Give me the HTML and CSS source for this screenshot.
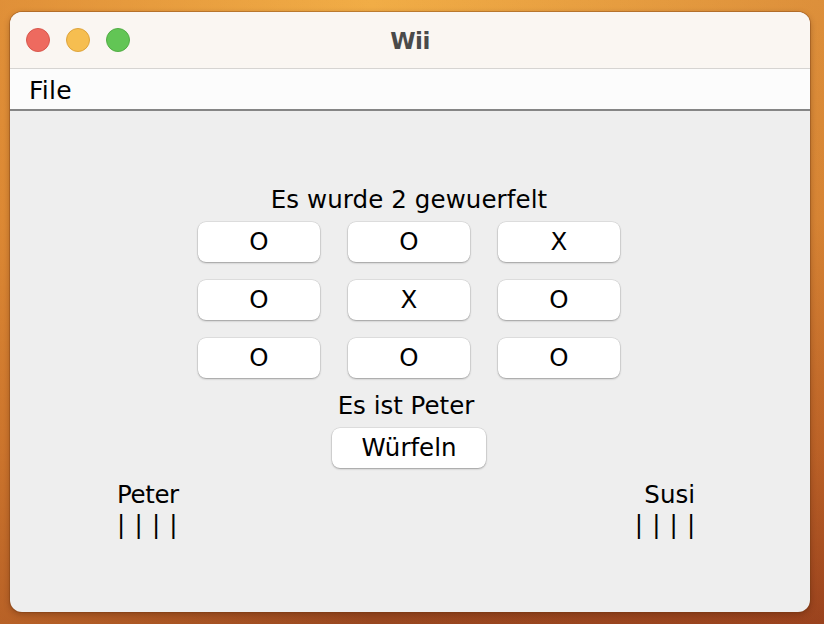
FILE: index.html
```html
<!DOCTYPE html>
<html lang="de">
<head>
<meta charset="utf-8">
<title>Wii</title>
<link rel="stylesheet" href="styles.css">
</head>
<body>
<div class="window">
  <div class="titlebar">
    <div class="lights">
      <span class="light red"></span>
      <span class="light yellow"></span>
      <span class="light green"></span>
    </div>
    <div class="title">Wii</div>
  </div>
  <div class="menubar"><span class="menu">File</span></div>
  <div class="content">
    <div class="status">Es wurde 2 gewuerfelt</div>
    <div class="board">
      <button class="cell">O</button>
      <button class="cell">O</button>
      <button class="cell">X</button>
      <button class="cell">O</button>
      <button class="cell">X</button>
      <button class="cell">O</button>
      <button class="cell">O</button>
      <button class="cell">O</button>
      <button class="cell">O</button>
    </div>
    <div class="turn">Es ist Peter</div>
    <button class="roll">Würfeln</button>
    <div class="players">
      <div class="player left">
        <div class="name">Peter</div>
        <div class="tally">| | | |</div>
      </div>
      <div class="player right">
        <div class="name">Susi</div>
        <div class="tally">| | | |</div>
      </div>
    </div>
  </div>
</div>
</body>
</html>
```

FILE: styles.css
```css
html, body {
  margin: 0;
  padding: 0;
}
body {
  width: 824px;
  height: 624px;
  overflow: hidden;
  background:
    linear-gradient(90deg, rgba(210,120,45,0.55) 0%, rgba(150,60,25,0.0) 45%, rgba(160,55,25,0.25) 100%),
    linear-gradient(180deg, #f1ad46 0%, #e89d3d 35%, #c4702c 72%, #98461f 100%);
  padding: 12px 14px 12px 10px;
  box-sizing: border-box;
  font-family: "DejaVu Sans", "Liberation Sans", sans-serif;
}
.window {
  width: 800px;
  height: 600px;
  border-radius: 12px;
  overflow: hidden;
  background: #eeeeee;
  display: flex;
  flex-direction: column;
  box-shadow: 0 0 0 1px rgba(120,60,20,0.35), 0 2px 6px rgba(60,20,0,0.35);
}
.titlebar {
  height: 56px;
  background: #faf6f2;
  border-bottom: 1px solid #d6d4d2;
  position: relative;
  display: flex;
  align-items: center;
  justify-content: center;
  flex-shrink: 0;
}
.lights {
  position: absolute;
  left: 16px;
  top: 16px;
  display: flex;
  gap: 16px;
}
.light {
  width: 24px;
  height: 24px;
  border-radius: 50%;
  box-sizing: border-box;
}
.red { background: #ee6a5f; border: 1px solid #d8574d; }
.yellow { background: #f6be50; border: 1px solid #dea43c; }
.green { background: #62c555; border: 1px solid #52ad45; }
.title {
  font-weight: bold;
  font-size: 23px;
  color: #4a4a4a;
  margin-top: 1px;
  letter-spacing: -0.5px;
}
.menubar {
  height: 40px;
  background: #fcfcfc;
  border-bottom: 2px solid #858585;
  display: flex;
  align-items: center;
  padding-left: 19px;
  flex-shrink: 0;
}
.menu {
  font-size: 25px;
  color: #000;
  letter-spacing: 0.3px;
  margin-top: 2px;
}
.content {
  flex: 1;
  display: flex;
  flex-direction: column;
  align-items: center;
  padding-top: 75px;
  color: #000;
  font-size: 24.5px;
}
.status {
  line-height: 28px;
  height: 28px;
  margin-left: -2px;
  letter-spacing: 0.1px;
}
.board {
  margin-top: 8px;
  display: grid;
  grid-template-columns: repeat(3, 122px);
  grid-auto-rows: 40px;
  column-gap: 28px;
  row-gap: 18px;
  margin-left: -2px;
}
button {
  font-family: inherit;
  font-size: 24.5px;
  color: #000;
  background: #ffffff;
  border: none;
  border-radius: 8px;
  box-shadow: 0 0 0 0.5px rgba(0,0,0,0.12), 0 1px 2px rgba(0,0,0,0.3);
  padding: 0;
  margin: 0;
  line-height: 40px;
}
.turn {
  margin-top: 14px;
  line-height: 28px;
  height: 28px;
  margin-left: -8px;
}
.roll {
  margin-top: 8px;
  width: 154px;
  height: 40px;
  margin-left: -2px;
}
.players {
  align-self: stretch;
  display: flex;
  justify-content: space-between;
  padding: 13px 115px 0 107px;
}
.player {
  display: flex;
  flex-direction: column;
}
.player.right {
  align-items: flex-end;
}
.name {
  line-height: 28px;
}
.player.left .name {
  letter-spacing: -0.4px;
}
.tally {
  line-height: 28px;
  margin-top: 2px;
  letter-spacing: 0.7px;
  margin-right: -1px;
}
```
